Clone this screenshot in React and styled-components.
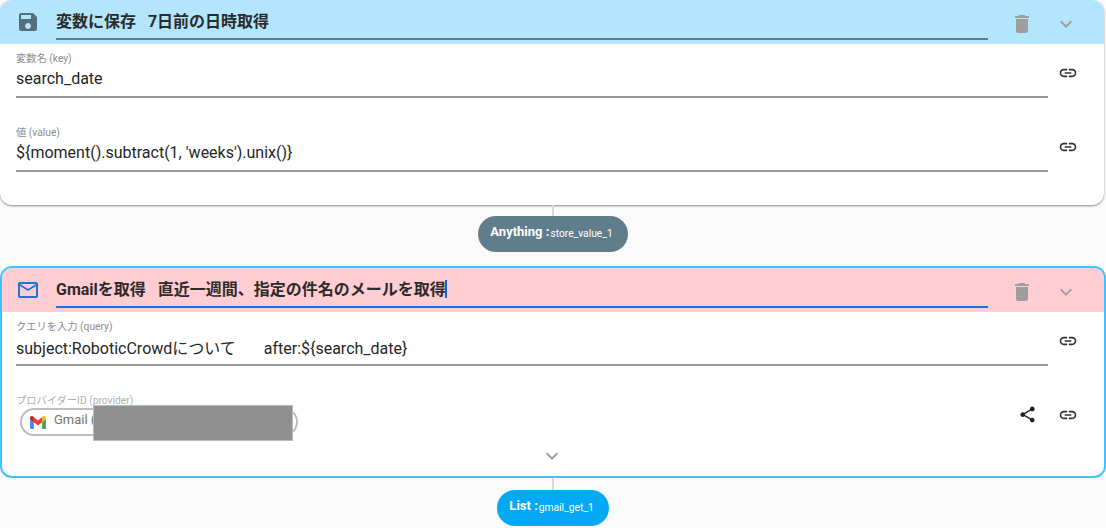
import React from "react";
import styled, { createGlobalStyle } from "styled-components";
import { MdSave, MdDelete, MdExpandMore, MdLink, MdShare, MdMailOutline } from "react-icons/md";

const Global = createGlobalStyle`
  html, body { margin: 0; padding: 0; background: #fafafa; }
  body { font-family: Roboto, "Noto Sans CJK JP", sans-serif; overflow: hidden; }
`;
const Page = styled.div`
  width: 1106px; height: 528px; display: flex; flex-direction: column; overflow: hidden; background: #fafafa;
`;
const Card = styled.section`
  box-sizing: border-box; background: #fff; border-radius: 12px; overflow: hidden; flex: none;
  border: ${p => (p.$active ? "2px solid #40c4ff" : "none")};
  margin-right: ${p => (p.$active ? "0" : "2px")};
  box-shadow: ${p => (p.$active ? "none" : "0 1px 2px rgba(0,0,0,.45)")};
  height: ${p => p.$h}px;
`;
const Header = styled.header`
  height: 44px; display: flex; align-items: flex-start; background: ${p => p.$bg};
`;
const HeadIcon = styled.div`
  width: 24px; height: 24px; margin: 10px 14px 0 ${p => p.$left}px; color: ${p => p.$color}; font-size: 24px; line-height: 0;
`;
const TitleBox = styled.div`
  box-sizing: border-box; width: 932px; height: 40px; margin-left: ${p => p.$ml || 0}px; padding-top: 12px;
  border-bottom: 2px solid ${p => p.$line};
  font-size: 16px; line-height: 20px; font-weight: 700; color: #2b2b2b; white-space: pre;
`;
const Caret = styled.span`
  display: inline-block; width: 2px; height: 18px; margin-left: -1px; background: #1565c0; vertical-align: -3px;
`;
const HeadAction = styled.div`
  margin: 12px 0 0 ${p => p.$ml}px; width: 24px; height: 24px; font-size: 24px; line-height: 0; color: ${p => p.$color};
`;
const Field = styled.div`
  display: flex; align-items: flex-start; height: 74px; padding-left: ${p => p.$pl}px;
`;
const FieldMain = styled.div`
  box-sizing: border-box; width: 1032px; height: 54px; padding-top: 9px;
  border-bottom: 2px solid #999;
`;
const Label = styled.div`
  font-size: 10.25px; line-height: 12px; color: ${p => (p.$light ? "#b0b0b0" : "#8c8c8c")}; white-space: nowrap;
`;
const Value = styled.div`
  margin-top: ${p => (p.$cjk ? 6 : 4)}px; font-size: 16px; line-height: 20px; color: #262626; white-space: pre;
`;
const LinkBtn = styled.div`
  margin: 19px 0 0 10px; width: 20px; height: 20px; font-size: 20px; line-height: 0; color: #333;
`;
const ProviderMain = styled.div`
  width: 1002px; padding-top: 9px; position: relative;
`;
const Chip = styled.div`
  box-sizing: border-box; width: 278px; height: 28px; margin: 1px 0 0 4px; padding: 0 0 5px 8px;
  display: flex; align-items: center; gap: 8px;
  border: 2px solid #bdbdbd; border-radius: 14px;
  font-size: 13px; color: #757575;
`;
const LogoWrap = styled.span`
  display: block; line-height: 0; margin-top: 6px; flex: none;
`;
const Redaction = styled.div`
  position: absolute; left: 77px; top: 19px; width: 200px; height: 36px; box-sizing: border-box;
  background: #909090; border: 1px solid #bbb;
`;
const ShareBtn = styled.div`
  width: 20px; height: 20px; margin: 19px 0 0 0; font-size: 19px; line-height: 0; color: #222;
`;
const ProviderLink = styled(LinkBtn)`
  margin-left: 20px;
`;
const MoreRow = styled.div`
  display: flex; justify-content: center; color: #a0a0a0; font-size: 24px; line-height: 0; margin-top: -16px; padding-right: 2px;
`;
const Connector = styled.div`
  height: ${p => p.$h}px; display: flex; flex-direction: column; align-items: center; flex: none;
`;
const Line = styled.div`
  width: 2px; height: ${p => p.$h}px; background: #d9d9d9; flex: none;
`;
const Pill = styled.div`
  height: 36px; flex: none; box-sizing: border-box; width: ${p => p.$w}px; padding-right: 3px; border-radius: 18px; background: ${p => p.$bg};
  color: #fff; display: flex; align-items: center; justify-content: center; white-space: nowrap;
`;
const PillType = styled.strong`
  font-size: 13px; font-weight: 700; margin-right: 1px; margin-top: -6px;
`;
const PillName = styled.span`
  font-size: 10.25px; font-weight: 400; margin-top: -2px;
`;

const GmailLogo = () => (
  <svg width="16" height="13" viewBox="0 0 17 14">
    <path d="M0 3v9.6C0 13.4.6 14 1.4 14H4V6.6z" fill="#4285f4" />
    <path d="M13 14h2.6c.8 0 1.4-.6 1.4-1.4V3l-4 3.6z" fill="#34a853" />
    <path d="M13 1.2V6.8l4-3V2c0-1.8-2-2.7-3.2-1.4z" fill="#fbbc04" />
    <path d="M4 6.8V1.2l4.5 3.6L13 1.2v5.6L8.5 10.3z" fill="#ea4335" />
    <path d="M0 2v1.8l4 3V1.2L3.2.6C2 -.7 0 .2 0 2z" fill="#c5221f" />
  </svg>
);

export default function App() {
  return (
    <Page>
      <Global />
      <Card $h={205}>
        <Header $bg="#b3e5fc">
          <HeadIcon $left={16} $color="#546e7a"><MdSave /></HeadIcon>
          <TitleBox $ml={2} $line="#607d8b">{"変数に保存   7日前の日時取得"}</TitleBox>
          <HeadAction $ml={22} $color="#9e9e9e"><MdDelete /></HeadAction>
          <HeadAction $ml={20} $color="#a0a0a0"><MdExpandMore /></HeadAction>
        </Header>
        <Field $pl={16}>
          <FieldMain>
            <Label>変数名 (key)</Label>
            <Value>search_date</Value>
          </FieldMain>
          <LinkBtn><MdLink /></LinkBtn>
        </Field>
        <Field $pl={16}>
          <FieldMain>
            <Label>値 (value)</Label>
            <Value>{"${moment().subtract(1, 'weeks').unix()}"}</Value>
          </FieldMain>
          <LinkBtn><MdLink /></LinkBtn>
        </Field>
      </Card>
      <Connector $h={61}>
        <Line $h={11} />
        <Pill $w={150} $bg="#607d8b"><PillType>Anything :</PillType><PillName>store_value_1</PillName></Pill>
      </Connector>
      <Card $active $h={212}>
        <Header $bg="#ffcdd2">
          <HeadIcon $left={14} $color="#1976d2"><MdMailOutline /></HeadIcon>
          <TitleBox $ml={2} $line="#1976d2">{"Gmailを取得   直近一週間、指定の件名のメールを取得"}<Caret /></TitleBox>
          <HeadAction $ml={22} $color="#9e9e9e"><MdDelete /></HeadAction>
          <HeadAction $ml={20} $color="#a0a0a0"><MdExpandMore /></HeadAction>
        </Header>
        <Field $pl={14}>
          <FieldMain>
            <Label>クエリを入力 (query)</Label>
            <Value $cjk>{"subject:RoboticCrowdについて　   after:${search_date}"}</Value>
          </FieldMain>
          <LinkBtn><MdLink /></LinkBtn>
        </Field>
        <Field $pl={14}>
          <ProviderMain>
            <Label $light>プロバイダーID (provider)</Label>
            <Chip><LogoWrap><GmailLogo /></LogoWrap>Gmail (</Chip>
            <Redaction />
          </ProviderMain>
          <ShareBtn><MdShare /></ShareBtn>
          <ProviderLink><MdLink /></ProviderLink>
        </Field>
        <MoreRow><MdExpandMore /></MoreRow>
      </Card>
      <Connector $h={50}>
        <Line $h={12} />
        <Pill $w={112} $bg="#03a9f4"><PillType>List :</PillType><PillName>gmail_get_1</PillName></Pill>
      </Connector>
    </Page>
  );
}
